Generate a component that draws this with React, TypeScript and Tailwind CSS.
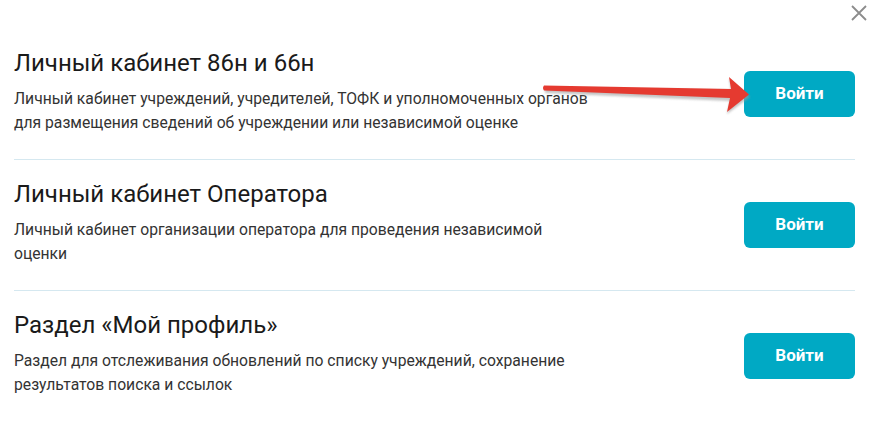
import React from "react";

const items = [
  {
    title: "Личный кабинет 86н и 66н",
    text: "Личный кабинет учреждений, учредителей, ТОФК и уполномоченных органов для размещения сведений об учреждении или независимой оценке",
  },
  {
    title: "Личный кабинет Оператора",
    text: "Личный кабинет организации оператора для проведения независимой оценки",
  },
  {
    title: "Раздел «Мой профиль»",
    text: "Раздел для отслеживания обновлений по списку учреждений, сохранение результатов поиска и ссылок",
  },
];

const App: React.FC = () => {
  return (
    <div
      className="relative w-[884px] h-[425px] bg-white pl-[14px] pr-[29px]"
      style={{ fontFamily: "Roboto, 'Noto Sans', sans-serif" }}
    >
      <header className="flex justify-end h-[29px] -mr-[12px] pt-[5px]">
        <button className="w-4 h-4 text-[#8c8c8c]">
          <svg viewBox="0 0 16 16" className="w-4 h-4">
            <path d="M1 1 L15 15 M15 1 L1 15" stroke="currentColor" strokeWidth="1.8" />
          </svg>
        </button>
      </header>
      <main>
        {items.map((item, i) => (
          <section
            key={item.title}
            className={
              "flex items-center justify-between pt-[20px] pb-[24px] " +
              (i < items.length - 1 ? "border-b border-[#d5e8f0]" : "")
            }
          >
            <article>
              <h2 className="text-[24px] leading-[28px] text-[#1a1a1a] mb-[10px]">
                {item.title}
              </h2>
              <p className="w-[578px] text-[15.7px] leading-[24px] text-[#333333]">
                {item.text}
              </p>
            </article>
            <button className="mt-1 w-[111px] h-[46px] rounded-[6px] bg-[#00a9c4] text-white text-[17px] font-bold">
              Войти
            </button>
          </section>
        ))}
      </main>
      <svg
        className="absolute left-0 top-0 pointer-events-none"
        width="884"
        height="425"
        viewBox="0 0 884 425"
      >
        <defs>
          <filter id="sh" x="-10%" y="-50%" width="120%" height="200%">
            <feGaussianBlur stdDeviation="1.2" />
          </filter>
        </defs>
        <path
          d="M545,88 L731,90 L729,79 L750,97 L727,114 L730,101 L545,93 Z"
          fill="#9e9e9e"
          opacity="0.6"
          filter="url(#sh)"
        />
        <path
          d="M544,85.5 Q542,88 544,90.5 L730,98 L727,112 L749,94.5 L729,77 L731,89 Z"
          fill="#e53a30"
        />
      </svg>
    </div>
  );
};

export default App;
